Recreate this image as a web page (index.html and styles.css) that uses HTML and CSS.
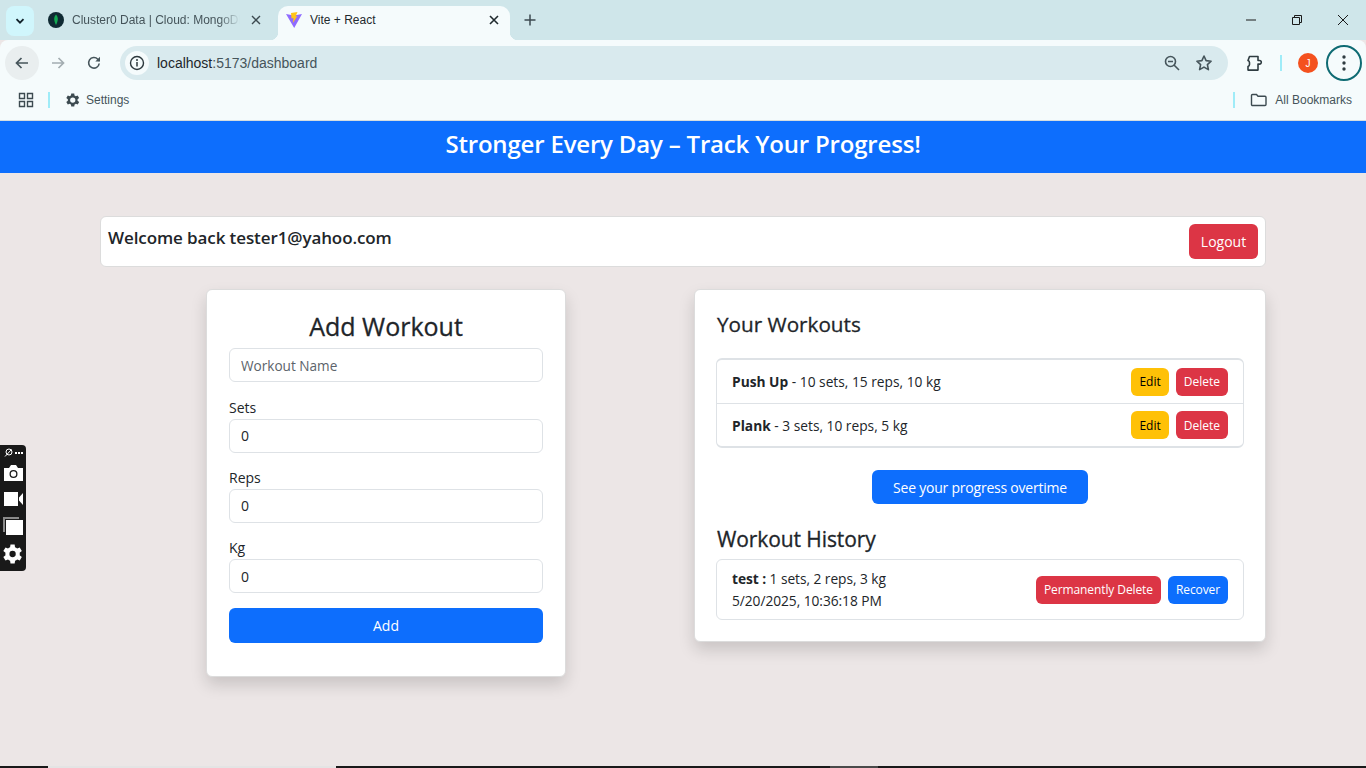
FILE: index.html
```html
<!DOCTYPE html>
<html lang="en">
<head>
  <meta charset="UTF-8">
  <title>Vite + React</title>
  <link rel="stylesheet" href="styles.css">
</head>
<body>

  <!-- Browser chrome -->
  <div class="tabstrip">
    <div class="tab-search">
      <svg width="12" height="12" viewBox="0 0 12 12"><path d="M2.500 4.200 6 7.700l3.500-3.500" fill="none" stroke="#12222a" stroke-width="1.800"/></svg>
    </div>
    <div class="tab tab-first">
      <svg class="favicon" width="16" height="16" viewBox="0 0 16 16"><circle cx="8" cy="8" r="8" fill="#0f2a33"/><path d="M8 2.500c2.200 2.200 2.600 5.600 0 10.500-2.600-4.900-2.200-8.300 0-10.500z" fill="#13aa52"/></svg>
      <span class="tab-title">Cluster0 Data | Cloud: MongoDB</span>
      <svg class="tab-close" width="10" height="10" viewBox="0 0 10 10"><path d="M1 1l8 8M9 1l-8 8" stroke="#3c4a50" stroke-width="1.400"/></svg>
    </div>
    <div class="tab tab-active">
      <svg class="favicon" width="16" height="16" viewBox="0 0 16 16">
        <path d="M0 2 8 3.500 16 2 8.200 16z" fill="#8f6bff"/>
        <path d="M5 1 11.500 0 9.500 4.500 11.500 4 6.800 11 7.500 6 5.500 6.500z" fill="#ffc517"/>
      </svg>
      <span class="tab-title">Vite + React</span>
      <svg class="tab-close" width="10" height="10" viewBox="0 0 10 10"><path d="M1 1l8 8M9 1l-8 8" stroke="#1f2a2e" stroke-width="1.600"/></svg>
    </div>
    <svg class="new-tab" width="12" height="12" viewBox="0 0 12 12"><path d="M6 .5v11M.5 6h11" stroke="#3c4a50" stroke-width="1.500"/></svg>
    <div class="window-buttons">
      <svg width="12" height="12" viewBox="0 0 12 12"><path d="M1 6h10" stroke="#1a1a1a"/></svg>
      <svg width="12" height="12" viewBox="0 0 12 12"><path d="M1.500 3.500h7v7h-7zM3.500 3.500v-2h7v7h-2" fill="none" stroke="#1a1a1a"/></svg>
      <svg width="12" height="12" viewBox="0 0 12 12"><path d="M1 1l10 10M11 1 1 11" stroke="#1a1a1a"/></svg>
    </div>
  </div>

  <div class="toolbar">
    <div class="nav-btn nav-back">
      <svg width="16" height="16" viewBox="0 0 16 16"><path d="M14 8H3M7.500 3 2.500 8l5 5" fill="none" stroke="#46555b" stroke-width="1.700"/></svg>
    </div>
    <div class="nav-btn">
      <svg width="16" height="16" viewBox="0 0 16 16"><path d="M2 8h11M8.500 3l5 5-5 5" fill="none" stroke="#a3adb1" stroke-width="1.700"/></svg>
    </div>
    <div class="nav-btn">
      <svg width="16" height="16" viewBox="0 0 16 16"><path d="M13.200 8.500A5.300 5.300 0 1 1 11.800 4.200L13.500 6" fill="none" stroke="#46555b" stroke-width="1.600"/><path d="M14 1.800V6.500H9.300z" fill="#46555b"/></svg>
    </div>
    <div class="omnibox">
      <div class="site-info">
        <svg width="16" height="16" viewBox="0 0 16 16"><circle cx="8" cy="8" r="6.500" fill="none" stroke="#2c383d" stroke-width="1.400"/><path d="M8 7v4.500" stroke="#2c383d" stroke-width="1.500"/><circle cx="8" cy="5" r="1" fill="#2c383d"/></svg>
      </div>
      <span class="url"><span class="url-host">localhost</span>:5173/dashboard</span>
      <svg class="omni-icon" width="18" height="18" viewBox="0 0 18 18"><circle cx="7.500" cy="7.500" r="5" fill="none" stroke="#46555b" stroke-width="1.600"/><path d="M5 7.500h5M11 11l5 5" stroke="#46555b" stroke-width="1.600"/></svg>
      <svg class="omni-icon" width="18" height="18" viewBox="0 0 18 18"><path d="M9 2l2.100 4.600 5 .6-3.700 3.400 1 5L9 13.100 4.600 15.600l1-5L1.900 7.200l5-.6z" fill="none" stroke="#46555b" stroke-width="1.600" stroke-linejoin="round"/></svg>
    </div>
    <svg class="ext-icon" width="18" height="18" viewBox="0 0 18 18"><path d="M3.500 2.500H12V6.500h1.500a1.800 1.800 0 0 1 0 3.600H12v6H2V12.500a2.200 2.200 0 0 0 1.500-2V8.500A2.200 2.200 0 0 0 2 6.500z" fill="none" stroke="#2f3c41" stroke-width="1.600" stroke-linejoin="round"/></svg>
    <span class="divider"></span>
    <div class="avatar">J</div>
    <div class="menu-btn">
      <svg width="4" height="16" viewBox="0 0 4 16"><circle cx="2" cy="2" r="1.700" fill="#2f3c41"/><circle cx="2" cy="8" r="1.700" fill="#2f3c41"/><circle cx="2" cy="14" r="1.700" fill="#2f3c41"/></svg>
    </div>
  </div>

  <div class="bookmarks">
    <svg width="16" height="16" viewBox="0 0 16 16"><path d="M1.500 1.500h5v5h-5zM9.500 1.500h5v5h-5zM1.500 9.500h5v5h-5zM9.500 9.500h5v5h-5z" fill="none" stroke="#3c4a50" stroke-width="1.400"/></svg>
    <span class="divider bm-divider"></span>
    <svg class="bm-gear" width="18" height="18" viewBox="0 0 24 24"><path fill="#3c4a50" d="M19.400 13a7.500 7.500 0 0 0 0-2l2.100-1.600-2-3.500-2.500 1a7.500 7.500 0 0 0-1.700-1L15 3.300h-4l-.4 2.600a7.500 7.500 0 0 0-1.700 1l-2.500-1-2 3.500L6.500 11a7.500 7.500 0 0 0 0 2l-2.100 1.600 2 3.500 2.500-1a7.500 7.500 0 0 0 1.700 1l.4 2.600h4l.4-2.600a7.500 7.500 0 0 0 1.700-1l2.500 1 2-3.500zM13 15.500a3.500 3.500 0 1 1 0-7 3.500 3.500 0 0 1 0 7z"/></svg>
    <span class="bm-label bm-settings">Settings</span>
    <span class="bm-spacer"></span>
    <span class="divider bm-divider"></span>
    <svg class="bm-folder" width="18" height="16" viewBox="0 0 18 16"><path d="M1.500 3.500a1 1 0 0 1 1-1h4l1.500 1.700h7a1 1 0 0 1 1 1v7.300a1 1 0 0 1-1 1h-12.500a1 1 0 0 1-1-1z" fill="none" stroke="#3c4a50" stroke-width="1.400"/></svg>
    <span class="bm-label">All Bookmarks</span>
  </div>

  <!-- Page -->
  <header class="banner">Stronger Every Day – Track Your Progress!</header>

  <main class="dashboard">
    <div class="welcome">
      <h3>Welcome back tester1@yahoo.com</h3>
      <button class="btn btn-red btn-logout">Logout</button>
    </div>

    <div class="columns">
      <div class="col">
        <form class="card add-card">
          <h2>Add Workout</h2>
          <input class="field" type="text" placeholder="Workout Name">
          <label class="lbl">Sets</label>
          <input class="field" type="number" value="0">
          <label class="lbl">Reps</label>
          <input class="field" type="number" value="0">
          <label class="lbl">Kg</label>
          <input class="field" type="number" value="0">
          <button type="button" class="btn btn-blue btn-add">Add</button>
        </form>
      </div>

      <div class="col">
        <div class="card list-card">
          <h4>Your Workouts</h4>
          <ul class="list list-workouts">
            <li>
              <span><b>Push Up</b> - 10 sets, 15 reps, 10 kg</span>
              <span class="actions"><button class="btn btn-sm btn-yellow">Edit</button><button class="btn btn-sm btn-red">Delete</button></span>
            </li>
            <li>
              <span><b>Plank</b> - 3 sets, 10 reps, 5 kg</span>
              <span class="actions"><button class="btn btn-sm btn-yellow">Edit</button><button class="btn btn-sm btn-red">Delete</button></span>
            </li>
          </ul>
          <div class="progress-wrap"><button class="btn btn-blue btn-progress">See your progress overtime</button></div>
          <h4 class="history-title">Workout History</h4>
          <ul class="list">
            <li class="history-row">
              <span class="history-text"><span><b>test :</b> 1 sets, 2 reps, 3 kg</span><span>5/20/2025, 10:36:18 PM</span></span>
              <span class="actions"><button class="btn btn-sm btn-red">Permanently Delete</button><button class="btn btn-sm btn-blue">Recover</button></span>
            </li>
          </ul>
        </div>
      </div>
    </div>
  </main>

  <!-- Floating capture widget -->
  <div class="capture">
    <div class="capture-top">
      <svg width="9" height="9" viewBox="0 0 9 9"><circle cx="5" cy="4" r="3" fill="none" stroke="#fff"/><path d="M1 8.500 7.500 1.500" stroke="#fff"/></svg>
      <span class="dots"></span>
    </div>
    <svg width="19" height="16" viewBox="0 0 19 16"><path fill="#fff" fill-rule="evenodd" d="M0 3h5l2-3h5l2 3h5v13H0zM9.500 5a4 4 0 1 0 0 8 4 4 0 0 0 0-8zm0 1.300a2.700 2.700 0 1 1 0 5.400 2.700 2.700 0 0 1 0-5.400z"/></svg>
    <svg width="19" height="14" viewBox="0 0 19 14"><path fill="#fff" d="M0 0h14v14H0zM15 5.500 19 1v12l-4-4.500z"/></svg>
    <svg width="20" height="18" viewBox="0 0 20 18"><path fill="#8a8a8a" d="M0 0h16v2H2v13H0z"/><path fill="#fff" d="M3 3h17v15H3z"/></svg>
    <svg class="capture-gear" width="20" height="20" viewBox="0 0 24 24"><path fill="#fff" d="M20 13.500a8 8 0 0 0 0-3l2.600-2-2.500-4.300-3.100 1.200a8 8 0 0 0-2.600-1.500L14 .7H9l-.5 3.200a8 8 0 0 0-2.500 1.500L3 4.200.4 8.500l2.600 2a8 8 0 0 0 0 3l-2.600 2L3 19.800l3-1.200a8 8 0 0 0 2.500 1.500l.5 3.200h5l.5-3.200a8 8 0 0 0 2.600-1.500l3 1.200 2.500-4.300zM11.500 15.800a3.800 3.800 0 1 1 0-7.600 3.800 3.800 0 0 1 0 7.600z"/></svg>
  </div>

  <!-- Taskbar sliver along the bottom edge -->
  <div class="taskbar"><span class="tb-light"></span><span class="tb-grey"></span></div>

</body>
</html>
```

FILE: styles.css
```css
* {
  box-sizing: border-box;
}

html, body {
  height: 768px;
  overflow: hidden;
}

body {
  margin: 0;
  background-color: #ece6e6;
  color: #212529;
  font-family: "Open Sans", "Noto Sans", Arial, sans-serif;
  font-size: 14px;
  position: relative;
}

/* Tab strip */
.tabstrip {
  height: 40px;
  background-color: #cfe6ea;
  display: flex;
  align-items: flex-end;
  font-family: "Liberation Sans", Arial, sans-serif;
  font-size: 12px;
  padding-left: 6px;
}

.tab-search {
  width: 28px;
  height: 30px;
  margin-bottom: 4px;
  background-color: #d0f6fc;
  border-radius: 8px;
  display: flex;
  align-items: center;
  justify-content: center;
}

.tab {
  height: 34px;
  display: flex;
  align-items: center;
  padding: 0 0 6px 12px;
  color: #45545a;
}

.tab-first {
  width: 242px;
  margin-left: 2px;
}

.tab-title {
  margin-left: 8px;
  white-space: nowrap;
}

.tab-first .tab-title {
  -webkit-mask-image: linear-gradient(90deg, #000 84%, transparent 96%);
  mask-image: linear-gradient(90deg, #000 84%, transparent 96%);
}

.tab-close {
  margin-left: auto;
  margin-right: 17px;
}

.tab-active {
  width: 232px;
  background-color: #f5fbfc;
  color: #1f2a2e;
  border-radius: 10px 10px 0 0;
  padding-left: 8px;
  position: relative;
}

.tab-active .tab-close {
  margin-right: 11px;
}

.tab-active::before,
.tab-active::after {
  content: "";
  position: absolute;
  bottom: 0;
  width: 8px;
  height: 8px;
}

.tab-active::before {
  left: -8px;
  background: radial-gradient(circle at 0 0, transparent 8px, #f5fbfc 8.5px);
}

.tab-active::after {
  right: -8px;
  background: radial-gradient(circle at 100% 0, transparent 8px, #f5fbfc 8.5px);
}

.new-tab {
  margin: 0 0 14px 14px;
}

.window-buttons {
  margin-left: auto;
  display: flex;
  gap: 34px;
  padding: 0 17px 14px 0;
}

/* Toolbar */
.toolbar {
  height: 46px;
  background-color: #f5fbfc;
  border-radius: 8px 8px 0 0;
  display: flex;
  align-items: center;
  padding: 0 4px 0 5px;
  font-family: "Liberation Sans", Arial, sans-serif;
}

.nav-btn {
  width: 34px;
  height: 34px;
  border-radius: 50%;
  display: flex;
  align-items: center;
  justify-content: center;
  margin-right: 2px;
}

.nav-back {
  background-color: #e9eeef;
}

.omnibox {
  width: 1108px;
  height: 34px;
  margin-left: 7px;
  background-color: #d9eaee;
  border-radius: 17px;
  display: flex;
  align-items: center;
  padding: 0 15px 0 5px;
  font-size: 14px;
  color: #46555b;
}

.site-info {
  width: 24px;
  height: 24px;
  background-color: #f5fbfc;
  border-radius: 50%;
  display: flex;
  align-items: center;
  justify-content: center;
  margin-right: 8px;
}

.url {
  flex: 1;
}

.url-host {
  color: #1d272b;
}

.omni-icon {
  margin-left: 14px;
}

.ext-icon {
  margin-left: 18px;
}

.divider {
  width: 2px;
  height: 16px;
  background-color: #9fecf8;
}

.toolbar .divider {
  margin-left: 16px;
}

.avatar {
  width: 20px;
  height: 20px;
  margin-left: 16px;
  border-radius: 50%;
  background-color: #f4511e;
  color: #fff;
  font-size: 10px;
  display: flex;
  align-items: center;
  justify-content: center;
}

.menu-btn {
  width: 36px;
  height: 36px;
  margin-left: 8px;
  border: 2px solid #0e6b73;
  border-radius: 50%;
  display: flex;
  align-items: center;
  justify-content: center;
}

/* Bookmarks bar */
.bookmarks {
  height: 35px;
  background-color: #f5fbfc;
  border-bottom: 1px solid #d5dde0;
  display: flex;
  align-items: center;
  padding: 0 14px 6px 18px;
  font-family: "Liberation Sans", Arial, sans-serif;
  font-size: 12px;
  color: #45545a;
}

.bm-divider {
  margin-left: 14px;
}

.bm-gear {
  margin-left: 13px;
}

.bm-label {
  margin-left: 7px;
}

.bm-settings {
  margin-left: 5px;
}

.bm-spacer {
  flex: 1;
}

.bm-folder {
  margin-left: 15px;
}

/* Page */
.banner {
  height: 52px;
  background-color: #0d6efd;
  color: #fff;
  font-size: 24px;
  font-weight: 600;
  line-height: 46px;
  text-align: center;
  letter-spacing: -0.18px;
}

.dashboard {
  padding: 43px 100px 0;
}

.welcome {
  height: 51px;
  background-color: #fff;
  border: 1px solid #dcdcdc;
  border-radius: 6px;
  display: flex;
  justify-content: space-between;
  align-items: flex-start;
  padding: 7px 7px 0;
}

h3 {
  margin: 2px 0 0;
  font-size: 17px;
  font-weight: 600;
  letter-spacing: -0.1px;
}

.columns {
  display: flex;
  gap: 22px;
  margin-top: 22px;
}

.col {
  flex: 1;
  display: flex;
  justify-content: center;
  align-items: flex-start;
}

.card {
  background-color: #fff;
  border: 1px solid #dcdcdc;
  border-radius: 6px;
  box-shadow: 0 8px 16px rgba(0, 0, 0, 0.15);
}

.add-card {
  width: 360px;
  height: 388px;
  padding: 22px;
  display: flex;
  flex-direction: column;
}

h2 {
  margin: 0;
  height: 36.4px;
  flex-shrink: 0;
  font-size: 25px;
  font-weight: 500;
  line-height: 29px;
  text-align: center;
  -webkit-text-stroke: 0.3px;
}

.field {
  width: 100%;
  height: 34px;
  border: 1px solid #dee2e6;
  border-radius: 6px;
  padding: 0 11px;
  font-family: inherit;
  font-size: 14px;
  color: #212529;
  flex-shrink: 0;
}

.field::placeholder {
  color: #5c636a;
  font-size: 13.6px;
}

.lbl {
  margin-top: 16.3px;
  height: 20px;
  line-height: 18px;
}

.btn {
  border: none;
  border-radius: 6px;
  color: #fff;
  font-family: inherit;
  font-size: 14px;
  padding: 0;
}

.btn-red {
  background-color: #dc3545;
}

.btn-blue {
  background-color: #0d6efd;
}

.btn-yellow {
  background-color: #ffc107;
  color: #000;
}

.btn-logout {
  width: 69px;
  height: 35px;
}

.btn-add {
  height: 35px;
  margin-top: 14.7px;
  flex-shrink: 0;
}

.list-card {
  width: 100%;
  height: 353px;
  padding: 20px 21px 0;
}

h4 {
  margin: 0 0 0 1px;
  font-size: 20.7px;
  font-weight: 500;
  line-height: 28px;
  -webkit-text-stroke: 0.3px;
}

.list {
  list-style: none;
  margin: 0;
  padding: 0;
  border: 1px solid #dee2e6;
  border-radius: 6px;
}

.list-workouts {
  margin-top: 20px;
  height: 90px;
  border-top-width: 2px;
  border-bottom-width: 2px;
}

.list li {
  height: 43px;
  padding: 0 15px;
  display: flex;
  justify-content: space-between;
  align-items: center;
  font-size: 13.75px;
}

.list-workouts li + li {
  border-top: 1px solid #dee2e6;
}

.actions {
  display: flex;
  gap: 7px;
}

.btn-sm {
  height: 28px;
  padding: 0 8px;
  font-size: 12px;
}

.progress-wrap {
  display: flex;
  justify-content: center;
  margin-top: 22px;
}

.btn-progress {
  width: 216px;
  height: 34px;
  letter-spacing: -0.22px;
}

.history-title {
  margin-top: 21px;
  margin-bottom: 6px;
  font-size: 21px;
  letter-spacing: -0.1px;
}

.list li.history-row {
  height: 59px;
}

.history-row .btn-sm {
  letter-spacing: -0.1px;
}

.history-text {
  display: flex;
  flex-direction: column;
  gap: 3px;
  letter-spacing: -0.05px;
}

/* Capture widget */
.capture {
  position: absolute;
  left: 0;
  top: 445px;
  width: 26px;
  height: 126px;
  background-color: #191919;
  border-radius: 0 4px 4px 0;
  display: flex;
  flex-direction: column;
  align-items: center;
  gap: 11px;
  padding-top: 3px;
}

.capture-top {
  display: flex;
  align-items: center;
  gap: 2px;
  height: 9px;
  margin-bottom: -3px;
}

.capture-gear {
  margin-top: -2px;
}

.dots {
  width: 8px;
  height: 2px;
  background: repeating-linear-gradient(90deg, #fff 0 2px, transparent 2px 3px);
}

/* Taskbar */
.taskbar {
  position: absolute;
  left: 0;
  right: 0;
  bottom: 0;
  height: 2px;
  background-color: #191919;
}

.tb-light {
  position: absolute;
  left: 48px;
  width: 288px;
  height: 2px;
  background-color: #e4e4e4;
}

.tb-grey {
  position: absolute;
  left: 830px;
  width: 48px;
  height: 2px;
  background-color: #4a4a4a;
}
```
